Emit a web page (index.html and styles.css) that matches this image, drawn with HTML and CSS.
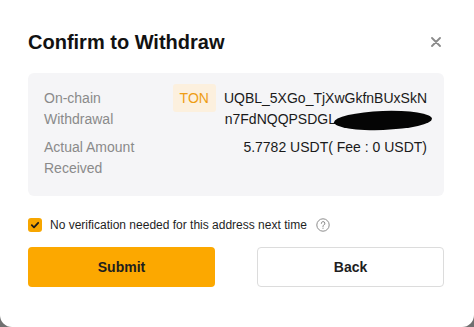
FILE: index.html
```html
<!DOCTYPE html>
<html lang="en">
<head>
<meta charset="utf-8">
<title>Confirm to Withdraw</title>
<link rel="stylesheet" href="styles.css">
</head>
<body>
<div class="modal">
  <div class="header">
    <h1 class="title">Confirm to Withdraw</h1>
    <svg class="close" width="10" height="10" viewBox="0 0 10 10"><path d="M1 1L9 9M9 1L1 9" stroke="#8a8a8a" stroke-width="1.8" stroke-linecap="round"/></svg>
  </div>
  <div class="info">
    <div class="row">
      <div class="label">On-chain Withdrawal</div>
      <div class="value address"><span class="badge">TON</span><span class="addr">UQBL_5XGo_TjXwGkfnBUxSkNn7FdNQQPSDGL</span><span class="blob"></span></div>
    </div>
    <div class="row">
      <div class="label">Actual Amount Received</div>
      <div class="value">5.7782 USDT( Fee : 0 USDT)</div>
    </div>
  </div>
  <div class="check-row">
    <span class="checkbox"><svg width="10" height="10" viewBox="0 0 10 10"><path d="M1.8 5.2L4 7.3L8.2 2.8" fill="none" stroke="#1c1c1c" stroke-width="1.8" stroke-linecap="round" stroke-linejoin="round"/></svg></span>
    <span class="check-text">No verification needed for this address next time</span>
    <svg class="help" width="14" height="14" viewBox="0 0 14 14"><circle cx="7" cy="7" r="6.2" fill="none" stroke="#8c8c8c" stroke-width="1"/><path d="M5.3 5.4a1.8 1.8 0 1 1 2.4 1.7c-.5.2-.7.5-.7 1v.5" fill="none" stroke="#8c8c8c" stroke-width="1" stroke-linecap="round"/><circle cx="7" cy="10.2" r=".6" fill="#8c8c8c"/></svg>
  </div>
  <div class="actions">
    <button class="btn primary">Submit</button>
    <button class="btn secondary">Back</button>
  </div>
</div>
</body>
</html>
```
FILE: styles.css
```css
html, body {
  margin: 0;
  padding: 0;
}
body {
  background: #707070;
  font-family: "Liberation Sans", Arial, sans-serif;
  width: 474px;
  height: 327px;
  overflow: hidden;
}
.modal {
  box-sizing: border-box;
  width: 474px;
  height: 327px;
  background: #ffffff;
  border-radius: 0 0 12px 12px;
  padding: 28px 30px 0 28px;
}
.header {
  display: flex;
  justify-content: space-between;
  align-items: center;
  height: 28px;
  margin-bottom: 17px;
}
.title {
  margin: 0;
  font-size: 20px;
  line-height: 28px;
  font-weight: bold;
  color: #121212;
}
.close {
  margin-right: 3px;
}
.info {
  background: #f5f5f7;
  border-radius: 6px;
  padding: 15px 17px 17px 16px;
  display: flex;
  flex-direction: column;
  gap: 7px;
}
.row {
  display: flex;
  font-size: 14px;
  line-height: 21px;
}
.label {
  flex: 0 0 126px;
  color: #8a8a8a;
}
.value {
  flex: 1;
  text-align: right;
  color: #1a1a1a;
}
.address {
  word-break: break-all;
}
.badge {
  background: #fcf0de;
  color: #ee9d14;
  padding: 6px 7px;
  border-radius: 3px;
  margin-right: 8px;
}
.blob {
  display: inline-block;
  width: 98px;
  height: 19px;
  margin-left: -2px;
  margin-right: -5px;
  background: #050505;
  border-radius: 50%;
  vertical-align: -6px;
  transform: rotate(-2deg);
}
.check-row {
  display: flex;
  align-items: center;
  height: 20px;
  margin-top: 19px;
  margin-bottom: 12px;
}
.checkbox {
  width: 14px;
  height: 14px;
  border-radius: 3px;
  background: #f7a600;
  display: flex;
  align-items: center;
  justify-content: center;
  margin-right: 8px;
}
.check-text {
  font-size: 12px;
  color: #1f1f1f;
}
.help {
  margin-left: 9px;
}
.actions {
  display: flex;
  justify-content: space-between;
}
.btn {
  width: 187px;
  height: 40px;
  border-radius: 4px;
  font-family: "Liberation Sans", Arial, sans-serif;
  font-size: 14px;
  font-weight: bold;
  color: #1e1e1e;
  cursor: pointer;
}
.primary {
  background: #fca800;
  border: none;
}
.secondary {
  background: #ffffff;
  border: 1px solid #dcdcdc;
}
```
